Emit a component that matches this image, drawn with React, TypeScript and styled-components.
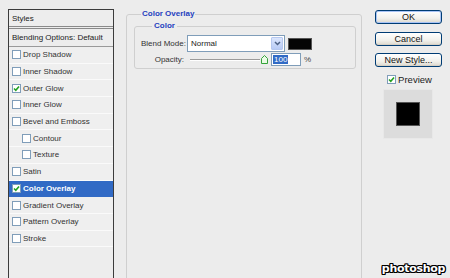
import styled, { createGlobalStyle } from 'styled-components';

const GlobalStyle = createGlobalStyle`
  html, body {
    margin: 0;
    padding: 0;
    background: #ececec;
  }
  body {
    font-family: "Liberation Sans", Arial, sans-serif;
    color: #222;
  }
`;

const Window = styled.div`
  position: relative;
  display: flex;
  align-items: flex-start;
  height: 278px;
  padding-left: 8px;
  overflow: hidden;
  background: #ececec;
`;

const StylesPanel = styled.div`
  margin-top: 9px;
  width: 106px;
  height: 290px;
  box-sizing: border-box;
  border: 1px solid #3c3c3c;
  background: #ededed;
  font-size: 8px;
`;

const PanelHeader = styled.div`
  height: 19px;
  box-sizing: border-box;
  padding-left: 3px;
  display: flex;
  align-items: center;
  border-bottom: 3px double #8a8a8a;
`;

const BlendingRow = styled.div`
  height: 18px;
  box-sizing: border-box;
  padding-left: 3px;
  display: flex;
  align-items: center;
  border-bottom: 1px solid #9a9a9a;
`;

const StyleRow = styled.div<{ $indent?: boolean; $selected?: boolean }>`
  height: 16.7px;
  box-sizing: border-box;
  display: flex;
  align-items: center;
  gap: 2px;
  padding-left: ${(p) => (p.$indent ? '13px' : '3px')};
  border-bottom: 1px solid ${(p) => (p.$selected ? '#316ac5' : '#fafafa')};
  background: ${(p) => (p.$selected ? '#316ac5' : '#efefef')};
  color: ${(p) => (p.$selected ? '#fff' : '#333')};
  font-weight: ${(p) => (p.$selected ? 'bold' : 'normal')};
`;

const Box = styled.span`
  width: 9px;
  height: 9px;
  box-sizing: border-box;
  border: 1px solid #7f9db9;
  background: #fff;
  display: inline-flex;
  align-items: center;
  justify-content: center;
  flex-shrink: 0;
`;

const CheckBox = ({ checked }: { checked?: boolean }) => (
  <Box>
    {checked && (
      <svg width="7" height="7" viewBox="0 0 7 7">
        <polyline points="1,3.5 2.8,5.3 6,1.6" fill="none" stroke="#21a121" strokeWidth="1.6" />
      </svg>
    )}
  </Box>
);

const Main = styled.div`
  margin-left: 12px;
  margin-top: 9px;
`;

const OuterGroup = styled.fieldset`
  margin: 0;
  width: 236px;
  height: 300px;
  box-sizing: border-box;
  padding: 2px 6px 0 7px;
  border: 1px solid #cfcfcf;
  border-radius: 3px;
  min-inline-size: 0;
`;

const GroupTitle = styled.legend`
  margin-left: 7px;
  padding: 0 1px;
  font-size: 8px;
  line-height: 10px;
  font-weight: bold;
  color: #1f3fbf;
`;

const InnerGroup = styled.fieldset`
  margin: 0;
  width: 222px;
  box-sizing: border-box;
  padding: 4px 4px 2px 6px;
  border: 1px solid #cfcfcf;
  border-radius: 3px;
  min-inline-size: 0;
  display: flex;
  flex-direction: column;
  gap: 1px;
`;

const InnerTitle = styled(GroupTitle)`
  margin-left: 11px;
  padding: 0 2px;
`;

const FieldRow = styled.div`
  display: flex;
  align-items: center;
  font-size: 8px;
`;

const Label = styled.span`
  width: 43px;
  flex-shrink: 0;
  white-space: nowrap;
  text-align: right;
  color: #333;
  margin-right: 3px;
`;

const Select = styled.div`
  width: 98px;
  height: 17px;
  box-sizing: border-box;
  border: 1px solid #7f9db9;
  background: #fff;
  display: flex;
  align-items: center;
  justify-content: space-between;
  padding: 1px 1px 1px 3px;
  color: #222;
`;

const ArrowButton = styled.span`
  width: 12px;
  height: 13px;
  box-sizing: border-box;
  border: 1px solid #b6c8f0;
  border-radius: 1px;
  background: linear-gradient(#dbe6fd, #b8cbf6);
  display: flex;
  align-items: center;
  justify-content: center;
`;

const Swatch = styled.span`
  margin-left: 3px;
  width: 24px;
  height: 12px;
  box-sizing: border-box;
  border: 1px solid #555;
  background: #050505;
`;

const Slider = styled.div`
  margin-left: 3px;
  width: 78px;
  height: 12px;
  display: flex;
  align-items: center;
  gap: 1px;
`;

const Track = styled.span`
  flex: 1;
  height: 1px;
  background: #9a9a9a;
  border-bottom: 1px solid #fff;
`;

const NumberInput = styled.span`
  margin-left: 3px;
  width: 30px;
  height: 13px;
  box-sizing: border-box;
  border: 1px solid #7f9db9;
  background: #fff;
  display: flex;
  align-items: center;
  padding-left: 1px;
`;

const Selected = styled.span`
  background: #316ac5;
  color: #fff;
  padding: 0 1px;
  line-height: 9px;
`;

const Unit = styled.span`
  margin-left: 3px;
  color: #444;
`;

const SideColumn = styled.div`
  margin-left: 13px;
  margin-top: 10px;
  width: 67px;
  display: flex;
  flex-direction: column;
  align-items: center;
`;

const Button = styled.button<{ $default?: boolean }>`
  width: 67px;
  height: 14px;
  margin-bottom: 7.5px;
  padding: 0;
  box-sizing: border-box;
  border: 1px solid #003c74;
  border-radius: 3px;
  background: linear-gradient(#ffffff, #f2f1ec 60%, #dcd8ce);
  box-shadow: ${(p) => (p.$default ? 'inset 0 0 0 1px #a9c4f5' : 'inset 0 -1px 0 #d6d0c5')};
  font-family: "Liberation Sans", Arial, sans-serif;
  font-size: 9px;
  line-height: 12px;
  color: #111;
`;

const PreviewToggle = styled.label`
  margin-top: -1px;
  margin-left: 2px;
  display: flex;
  align-items: center;
  gap: 2px;
  font-size: 9.5px;
  color: #222;
`;

const PreviewBox = styled.div`
  margin-top: 4px;
  margin-right: 2px;
  width: 50px;
  height: 50px;
  box-sizing: border-box;
  background: #dcdcdc;
  border: 1px solid #e8e8e8;
  display: flex;
  align-items: center;
  justify-content: center;
`;

const PreviewSquare = styled.div`
  width: 24px;
  height: 24px;
  box-sizing: border-box;
  background: #000;
  border: 1px solid #555;
`;

const Watermark = styled.div`
  position: absolute;
  right: 5px;
  bottom: 3px;
  font-family: "DejaVu Sans", Verdana, sans-serif;
  font-weight: bold;
  font-size: 11px;
  letter-spacing: -0.3px;
  color: #fff;
  text-shadow: 1px 0 0 #000, -1px 0 0 #000, 0 1px 0 #000, 0 -1px 0 #000,
    1px 1px 0 #000, -1px -1px 0 #000, 1px -1px 0 #000, -1px 1px 0 #000;
`;

const styleItems: { name: string; checked?: boolean; indent?: boolean; selected?: boolean }[] = [
  { name: 'Drop Shadow' },
  { name: 'Inner Shadow' },
  { name: 'Outer Glow', checked: true },
  { name: 'Inner Glow' },
  { name: 'Bevel and Emboss' },
  { name: 'Contour', indent: true },
  { name: 'Texture', indent: true },
  { name: 'Satin' },
  { name: 'Color Overlay', checked: true, selected: true },
  { name: 'Gradient Overlay' },
  { name: 'Pattern Overlay' },
  { name: 'Stroke' },
];

export default function App() {
  return (
    <>
      <GlobalStyle />
      <Window>
        <StylesPanel>
          <PanelHeader>Styles</PanelHeader>
          <BlendingRow>Blending Options: Default</BlendingRow>
          {styleItems.map((item) => (
            <StyleRow key={item.name} $indent={item.indent} $selected={item.selected}>
              <CheckBox checked={item.checked} />
              {item.name}
            </StyleRow>
          ))}
        </StylesPanel>

        <Main>
          <OuterGroup>
            <GroupTitle>Color Overlay</GroupTitle>
            <InnerGroup>
              <InnerTitle>Color</InnerTitle>
              <FieldRow>
                <Label>Blend Mode:</Label>
                <Select>
                  Normal
                  <ArrowButton>
                    <svg width="7" height="5" viewBox="0 0 7 5">
                      <polyline points="1,1 3.5,3.5 6,1" fill="none" stroke="#4d6185" strokeWidth="1.5" />
                    </svg>
                  </ArrowButton>
                </Select>
                <Swatch />
              </FieldRow>
              <FieldRow>
                <Label>Opacity:</Label>
                <Slider>
                  <Track />
                  <svg width="7" height="9" viewBox="0 0 7 9">
                    <polygon points="0.5,3.5 3.5,0.5 6.5,3.5 6.5,8.5 0.5,8.5" fill="#eafbe6" stroke="#35a33a" />
                  </svg>
                </Slider>
                <NumberInput>
                  <Selected>100</Selected>
                </NumberInput>
                <Unit>%</Unit>
              </FieldRow>
            </InnerGroup>
          </OuterGroup>
        </Main>

        <SideColumn>
          <Button $default>OK</Button>
          <Button>Cancel</Button>
          <Button>New Style...</Button>
          <PreviewToggle>
            <CheckBox checked />
            Preview
          </PreviewToggle>
          <PreviewBox>
            <PreviewSquare />
          </PreviewBox>
        </SideColumn>

        <Watermark>photoshop</Watermark>
      </Window>
    </>
  );
}
